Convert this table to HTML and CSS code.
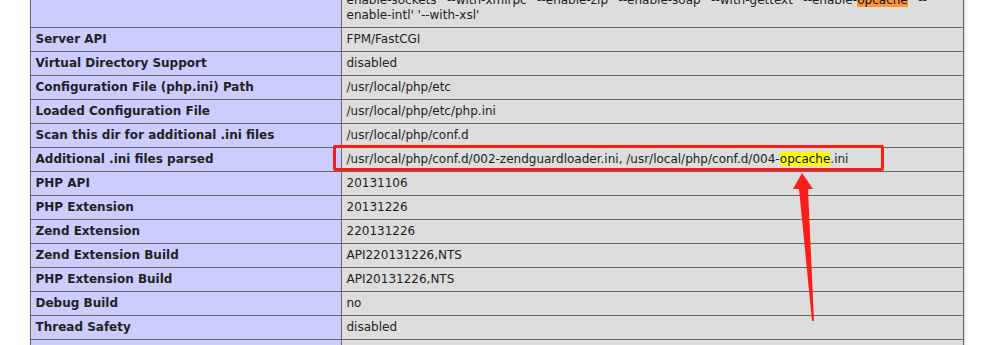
FILE: index.html
```html
<!DOCTYPE html>
<html>
<head>
<meta charset="utf-8">
<title>phpinfo()</title>
<link rel="stylesheet" href="styles.css">
</head>
<body>
<div class="page">
  <table class="info">
    <tr>
      <td class="e">Configure Command</td>
      <td class="v cfg">
        <span class="ln">'./configure' '--prefix=/usr/local/php' '--with-config-file-path=/usr/local/php/etc' '--</span>
        <span class="ln">with-config-file-scan-dir=/usr/local/php/conf.d' '--enable-fpm' '--with-fpm-user=www' '--</span>
        <span class="ln">enable-sockets' '--with-xmlrpc' '--enable-zip' '--enable-soap' '--with-gettext' '--enable-<mark class="hl-orange">opcache</mark>' '--</span>
        <span class="ln">enable-intl' '--with-xsl'</span>
      </td>
    </tr>
    <tr><td class="e">Server API</td><td class="v">FPM/FastCGI</td></tr>
    <tr><td class="e">Virtual Directory Support</td><td class="v">disabled</td></tr>
    <tr><td class="e">Configuration File (php.ini) Path</td><td class="v">/usr/local/php/etc</td></tr>
    <tr><td class="e">Loaded Configuration File</td><td class="v">/usr/local/php/etc/php.ini</td></tr>
    <tr><td class="e">Scan this dir for additional .ini files</td><td class="v">/usr/local/php/conf.d</td></tr>
    <tr><td class="e">Additional .ini files parsed</td><td class="v">/usr/local/php/conf.d/002-zendguardloader.ini, /usr/local/php/conf.d/004-<mark class="hl-yellow">opcache</mark>.ini</td></tr>
    <tr><td class="e">PHP API</td><td class="v">20131106</td></tr>
    <tr><td class="e">PHP Extension</td><td class="v">20131226</td></tr>
    <tr><td class="e">Zend Extension</td><td class="v">220131226</td></tr>
    <tr><td class="e">Zend Extension Build</td><td class="v">API220131226,NTS</td></tr>
    <tr><td class="e">PHP Extension Build</td><td class="v">API20131226,NTS</td></tr>
    <tr><td class="e">Debug Build</td><td class="v">no</td></tr>
    <tr><td class="e">Thread Safety</td><td class="v">disabled</td></tr>
    <tr><td class="e">&nbsp;</td><td class="v">&nbsp;</td></tr>
  </table>

  <div class="annot-box"></div>
  <svg class="annot-arrow" width="993" height="345" viewBox="0 0 993 345">
    <polygon points="802,173 813,189 808,189 814,321 812,321 799,189 793,189" fill="#fb1d17"/>
  </svg>
</div>
</body>
</html>
```

FILE: styles.css
```css
html, body {
  margin: 0;
  padding: 0;
  background: #fff;
  overflow: hidden;
}

body {
  color: #222;
  font-family: "DejaVu Sans", Verdana, sans-serif;
}

.page {
  position: relative;
  width: 993px;
  height: 345px;
  overflow: hidden;
}

.info {
  border-collapse: collapse;
  border: 0;
  width: 934px;
  margin: -42px auto 0;
  box-shadow: 1px 2px 3px #ccc;
}

.info td {
  border: 1px solid #666;
  font-size: 12px;
  line-height: 15px;
  vertical-align: baseline;
  padding: 4px 5px;
  text-align: left;
}

.e {
  background-color: #ccf;
  width: 300px;
  font-weight: bold;
}

.info td.v {
  background-color: #ddd;
}

.cfg .ln {
  display: block;
  white-space: nowrap;
}

mark {
  color: #111;
  padding: 0;
}

.hl-orange {
  background: #ff9632;
}

.hl-yellow {
  background: #ffff00;
}

.annot-box {
  position: absolute;
  left: 333px;
  top: 145px;
  width: 545px;
  height: 20px;
  border: 3px solid #fb1d17;
  border-radius: 2px;
}

.annot-arrow {
  position: absolute;
  left: 0;
  top: 0;
  pointer-events: none;
}
```
